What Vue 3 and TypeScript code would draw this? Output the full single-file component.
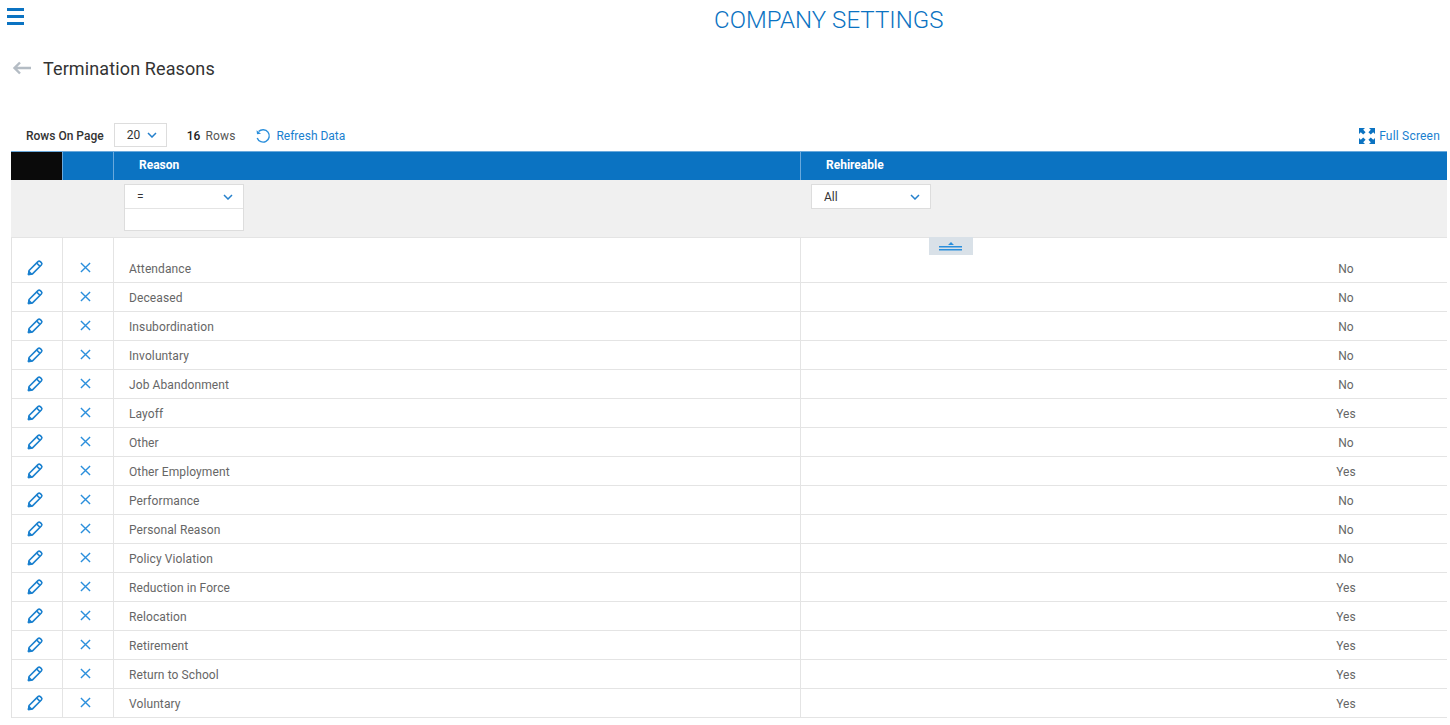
<script setup lang="ts">
interface Reason {
  name: string;
  rehireable: 'Yes' | 'No';
}

const reasons: Reason[] = [
  { name: 'Attendance', rehireable: 'No' },
  { name: 'Deceased', rehireable: 'No' },
  { name: 'Insubordination', rehireable: 'No' },
  { name: 'Involuntary', rehireable: 'No' },
  { name: 'Job Abandonment', rehireable: 'No' },
  { name: 'Layoff', rehireable: 'Yes' },
  { name: 'Other', rehireable: 'No' },
  { name: 'Other Employment', rehireable: 'Yes' },
  { name: 'Performance', rehireable: 'No' },
  { name: 'Personal Reason', rehireable: 'No' },
  { name: 'Policy Violation', rehireable: 'No' },
  { name: 'Reduction in Force', rehireable: 'Yes' },
  { name: 'Relocation', rehireable: 'Yes' },
  { name: 'Retirement', rehireable: 'Yes' },
  { name: 'Return to School', rehireable: 'Yes' },
  { name: 'Voluntary', rehireable: 'Yes' },
];
</script>

<template>
  <div class="page">
    <header class="topbar">
      <button class="menu" aria-label="Menu"><span></span><span></span><span></span></button>
      <h1 class="title">COMPANY SETTINGS</h1>
    </header>

    <div class="subhead">
      <svg class="back" width="20" height="14" viewBox="0 0 20 14" fill="none" stroke="#b4bcc4" stroke-width="2.4">
        <path d="M19 7H3M8 1.5 2.5 7 8 12.5" />
      </svg>
      <h2>Termination Reasons</h2>
    </div>

    <div class="toolbar">
      <span class="rows-label">Rows On Page</span>
      <div class="page-size">
        <span>20</span>
        <svg width="10" height="6" viewBox="0 0 10 6" fill="none" stroke="#2580cc" stroke-width="1.5"><path d="M1 1l4 4 4-4" /></svg>
      </div>
      <span class="count"><b>16</b> Rows</span>
      <a class="refresh">
        <svg width="16" height="16" viewBox="0 0 16 16" fill="none" stroke="#2b8fdc" stroke-width="1.4">
          <path d="M3.6 3.6A6.2 6.2 0 1 1 2.2 10" />
          <path d="M1.5 2.2 2 6.2l4-.5z" fill="#2b8fdc" stroke="none" />
        </svg>
        Refresh Data
      </a>
      <a class="fullscreen">
        <svg width="16" height="16" viewBox="0 0 16 16" fill="#0b73c2">
          <path d="M0 0h6L4.2 1.8 6.6 4.2 4.2 6.6 1.8 4.2 0 6zM16 0v6l-1.8-1.8-2.4 2.4-2.4-2.4 2.4-2.4L10 0zM0 16v-6l1.8 1.8 2.4-2.4 2.4 2.4-2.4 2.4L6 16zM16 16h-6l1.8-1.8-2.4-2.4 2.4-2.4 2.4 2.4L16 10z" />
        </svg>
        Full Screen
      </a>
    </div>

    <div class="grid">
      <div class="row head">
        <div class="cell corner"></div>
        <div class="cell"></div>
        <div class="cell name">Reason</div>
        <div class="cell name">Rehireable</div>
      </div>

      <div class="row filters">
        <div class="cell"></div>
        <div class="cell"></div>
        <div class="cell">
          <div class="filter-box">
            <div class="select">
              <span>=</span>
              <svg width="10" height="6" viewBox="0 0 10 6" fill="none" stroke="#2580cc" stroke-width="1.5"><path d="M1 1l4 4 4-4" /></svg>
            </div>
            <div class="input"></div>
          </div>
        </div>
        <div class="cell">
          <div class="filter-box">
            <div class="select all">
              <span>All</span>
              <svg width="10" height="6" viewBox="0 0 10 6" fill="none" stroke="#2580cc" stroke-width="1.5"><path d="M1 1l4 4 4-4" /></svg>
            </div>
          </div>
        </div>
      </div>

      <div class="body">
        <button class="collapse" aria-label="Collapse filters">
          <svg width="24" height="9" viewBox="0 0 24 9" fill="#2b8fdc">
            <path d="M12 0l3 3H9zM0 4h23v1.4H0zM0 7h23v1.4H0z" />
          </svg>
        </button>
        <div v-for="(item, i) in reasons" :key="item.name" class="row data" :class="{ first: i === 0 }">
          <div class="cell icon pencil">
            <svg width="17" height="17" viewBox="0 0 18 18" fill="none" stroke="#1a80cf" stroke-width="1.7" stroke-linejoin="round">
              <path d="M2.2 12.2 11.6 2.8a1.8 1.8 0 0 1 2.5 0l1.1 1.1a1.8 1.8 0 0 1 0 2.5L5.8 15.8 1.6 16.4z" />
              <path d="M10.2 4.2l3.6 3.6" />
              <path d="M1.6 16.4l.5-3 2.6 2.6z" fill="#1a80cf" />
            </svg>
          </div>
          <div class="cell icon remove">
            <svg width="11" height="11" viewBox="0 0 12 12" fill="none" stroke="#2b8fdc" stroke-width="1.5"><path d="M1 1l10 10M11 1 1 11" /></svg>
          </div>
          <div class="cell text">{{ item.name }}</div>
          <div class="cell value"><span>{{ item.rehireable }}</span></div>
        </div>
      </div>
    </div>
  </div>
</template>

<style scoped>
.page {
  height: 725px;
  overflow: hidden;
  font-family: Roboto, "Liberation Sans", sans-serif;
  font-size: 12px;
  color: #333;
  background: #fff;
}

.topbar {
  display: flex;
  height: 41px;
}

.menu {
  display: flex;
  flex-direction: column;
  gap: 4px;
  width: 17px;
  height: 18px;
  margin: 8px 0 0 7px;
  padding: 0;
  border: 0;
  background: none;
}

.menu span {
  display: block;
  height: 3px;
  background: #0b73c2;
}

.title {
  margin: 6px 0 0 690px;
  font-size: 24px;
  font-weight: 300;
  line-height: 28px;
  letter-spacing: 0.05px;
  color: #0b73c2;
  white-space: nowrap;
}

.subhead {
  display: flex;
  align-items: center;
  height: 24px;
  margin-top: 15px;
  padding-left: 12px;
}

.back {
  margin-right: 11px;
}

.subhead h2 {
  margin: 0;
  font-size: 18px;
  font-weight: 400;
  letter-spacing: 0.12px;
  color: #333;
}

.toolbar {
  display: flex;
  align-items: center;
  height: 24px;
  margin-top: 44px;
  padding: 0 10px 0 26px;
}

.rows-label {
  font-weight: 500;
}

.page-size {
  display: flex;
  align-items: center;
  gap: 7px;
  width: 53px;
  height: 24px;
  box-sizing: border-box;
  margin: 0 0 2px 10px;
  padding-left: 12px;
  border: 1px solid #ddd;
}

.count {
  margin-left: 20px;
  letter-spacing: 0.1px;
  color: #555;
}

.count b {
  font-weight: 500;
  color: #222;
  margin-right: 2px;
}

.refresh,
.fullscreen {
  display: flex;
  align-items: center;
  color: #1a80cf;
}

.refresh {
  gap: 5px;
  margin-left: 20px;
}

.fullscreen {
  gap: 4px;
  margin-left: auto;
  letter-spacing: 0.2px;
}

.grid {
  margin: 3px 3px 0 11px;
}

.row {
  display: grid;
  grid-template-columns: 51px 51px 687px 1fr;
}

.head {
  height: 29px;
  box-sizing: border-box;
  border-top: 1px solid #6aa9dc;
  background: #0b73c2;
  color: #fff;
  font-weight: 700;
}

.head .cell {
  border-left: 1px solid #6aa9dc;
  line-height: 27px;
}

.head .corner {
  background: #0a0a0a;
  border-left: 0;
}

.head .name {
  padding-left: 25px;
}

.filters {
  height: 58px;
  box-sizing: border-box;
  background: #f0f0f0;
  border-bottom: 1px solid #e4e4e4;
}

.filters .cell {
  padding: 4px 0 0 11px;
}

.filter-box {
  width: 120px;
  border: 1px solid #ddd;
  box-sizing: border-box;
  background: #fff;
}

.select {
  display: flex;
  align-items: center;
  justify-content: space-between;
  height: 23px;
  padding: 1px 10px 0 12px;
  box-sizing: border-box;
  color: #333;
}

.input {
  height: 21px;
  border-top: 1px solid #e4e4e4;
}

.body {
  position: relative;
  border-left: 1px solid #e2e2e2;
}

.collapse {
  position: absolute;
  top: -1px;
  left: 917px;
  width: 44px;
  height: 18px;
  padding: 0;
  border: 0;
  background: #d9e1e8;
  line-height: 0;
}

.data {
  height: 29px;
  box-sizing: border-box;
  border-bottom: 1px solid #e4e4e4;
  grid-template-columns: 50px 51px 687px 1fr;
}

.data.first {
  height: 45px;
}

.data .cell {
  display: flex;
  align-items: flex-end;
  padding-bottom: 6px;
  color: #666;
  border-left: 1px solid #e4e4e4;
}

.data .cell:first-child {
  border-left: 0;
}

.data .text {
  padding-left: 15px;
  letter-spacing: 0.1px;
}

.data .icon {
  justify-content: center;
}

.data .pencil {
  padding: 0 3px 6px 0;
}

.data .remove {
  padding: 0 5px 9px 0;
}

.data .value {
  justify-content: flex-end;
  padding-right: 81px;
}

.data .value span {
  width: 40px;
  text-align: center;
}
</style>

<style>
html,
body {
  margin: 0;
  overflow: hidden;
}
</style>
